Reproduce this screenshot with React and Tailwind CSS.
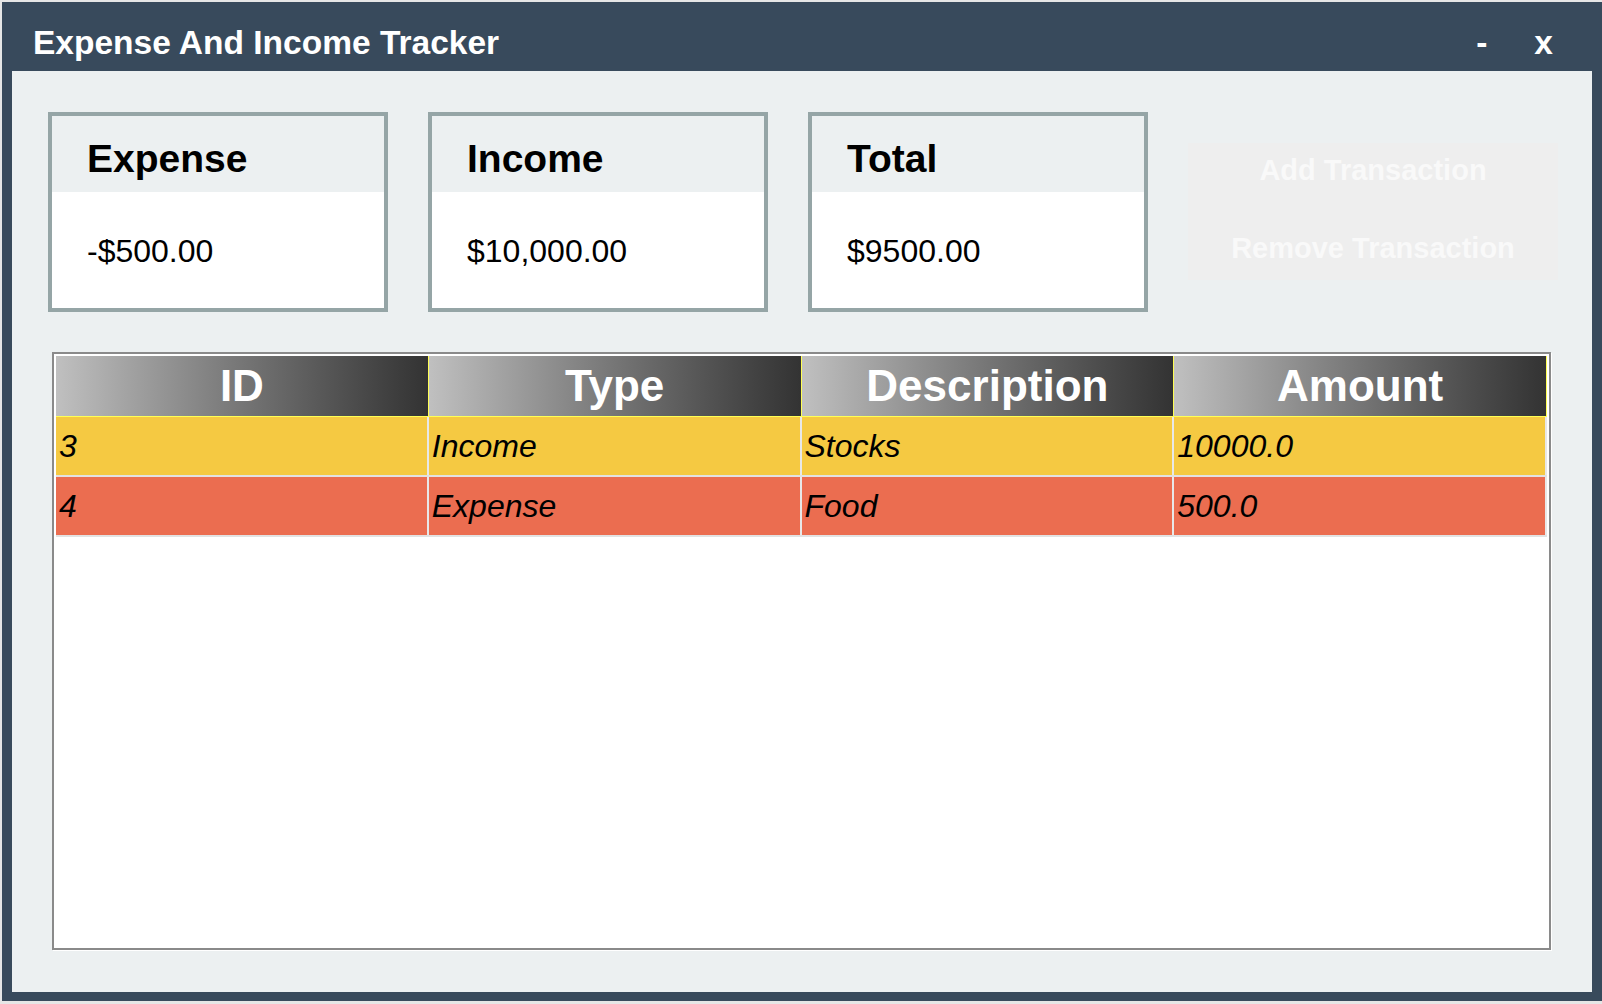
// App.jsx
const font = { fontFamily: '"Liberation Sans", Arial, Helvetica, sans-serif' };

const cards = [
  { title: 'Expense', value: '-$500.00' },
  { title: 'Income', value: '$10,000.00' },
  { title: 'Total', value: '$9500.00' },
];

const columns = ['ID', 'Type', 'Description', 'Amount'];

const rows = [
  { id: '3', type: 'Income', description: 'Stocks', amount: '10000.0', color: 'bg-[#f5c942]' },
  { id: '4', type: 'Expense', description: 'Food', amount: '500.0', color: 'bg-[#eb6d50]' },
];

const SummaryCard = ({ title, value }) => (
  <div className="w-[340px] h-[200px] border-4 border-[#95a5a6] flex flex-col">
    <div className="h-[76px] bg-[#ecf0f1] pl-[35px] pt-[23px]">
      <p className="text-[39px] leading-none font-bold text-black">{title}</p>
    </div>
    <div className="flex-1 bg-white pl-[35px] pt-[43px]">
      <p className="text-[32px] leading-none text-black">{value}</p>
    </div>
  </div>
);

const App = () => {
  return (
    <div className="w-[1602px] h-[1004px] bg-[#e6e6e6] overflow-hidden pt-[2px] pl-[2px]" style={font}>
      <div className="w-[1600px] h-[999px] bg-[#384a5c] flex flex-col">
        {/* title bar */}
        <div className="h-[69px] flex pt-[24px] pl-[31px] pr-[49px] text-white font-bold text-[33.5px] leading-none">
          <span>Expense And Income Tracker</span>
          <span className="ml-auto">-</span>
          <span className="ml-[47px]">x</span>
        </div>

        <div className="flex-1 mx-[10px] mb-[9px] bg-[#ecf0f1] flex flex-col pt-[41px] pl-[36px] pr-[34px] pb-[42px]">
          <div className="flex">
            <div className="flex gap-[40px]">
              {cards.map((c) => (
                <SummaryCard key={c.title} title={c.title} value={c.value} />
              ))}
            </div>
            <div className="ml-[40px] mt-[31px] w-[370px] h-[137px] bg-[#eeeeee] flex flex-col text-[#f9f9f9] font-bold text-[29px] leading-none">
              <button className="h-[54px] flex items-center justify-center">Add Transaction</button>
              <button className="mt-[24px] h-[54px] flex items-center justify-center">Remove Transaction</button>
            </div>
          </div>

          <div className="mt-[40px] ml-[4px] w-[1499px] flex-1 border-2 border-[#8a8a8a] bg-white p-[2px] shadow-[1px_1px_0_#ffffff]">
            <div className="grid grid-cols-4 h-[61px] border-b border-[#ffff55]">
              {columns.map((col) => (
                <div
                  key={col}
                  className="flex items-center justify-center border-r border-[#ffff55] bg-gradient-to-r from-[#c0c0c0] to-[#333333] text-white font-bold text-[44px] leading-none"
                >
                  {col}
                </div>
              ))}
            </div>
            {rows.map((r) => (
              <div key={r.id} className={`grid grid-cols-4 h-[60px] border-b-2 border-[#e2e2e2] ${r.color}`}>
                {[r.id, r.type, r.description, r.amount].map((v, i) => (
                  <div
                    key={i}
                    className="flex items-center pl-[3px] border-r-2 border-[#e8e8e8] italic text-[32px] leading-none text-black"
                  >
                    {v}
                  </div>
                ))}
              </div>
            ))}
          </div>
        </div>
      </div>
    </div>
  );
};

export default App;
